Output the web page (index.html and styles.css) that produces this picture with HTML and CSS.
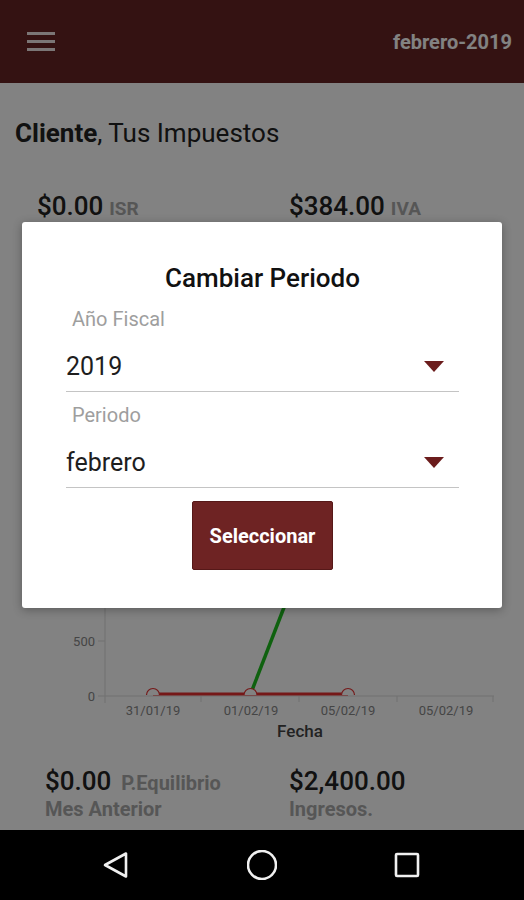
FILE: index.html
```html
<!DOCTYPE html>
<html lang="es">
<head>
    <meta charset="UTF-8">
    <meta name="viewport" content="width=device-width, initial-scale=1.0">
    <title>Tus Impuestos</title>
    <link rel="stylesheet" href="styles.css">
</head>
<body>
  <div class="phone">
    <div class="app">
      <!-- Toolbar -->
      <header class="toolbar">
        <button class="menu-btn" aria-label="Menu">
          <span></span><span></span><span></span>
        </button>
        <span class="period">febrero-2019</span>
      </header>

      <main class="content">
        <h1 class="greeting"><b>Cliente</b>, Tus Impuestos</h1>

        <div class="stats top">
          <div class="stat"><span class="amount">$0.00</span> <span class="tag">ISR</span></div>
          <div class="stat"><span class="amount">$384.00</span> <span class="tag">IVA</span></div>
        </div>

        <!-- Chart -->
        <svg class="chart" width="524" height="515" viewBox="0 230 524 515">
          <line class="axis" x1="105" y1="230" x2="105" y2="703"/>
          <line class="axis" x1="105" y1="696" x2="494" y2="696"/>
          <line class="axis" x1="98" y1="641" x2="105" y2="641"/>
          <line class="axis" x1="98" y1="696" x2="105" y2="696"/>
          <line class="axis" x1="98" y1="586" x2="105" y2="586"/>
          <line class="axis" x1="201" y1="696" x2="201" y2="702"/>
          <line class="axis" x1="299" y1="696" x2="299" y2="702"/>
          <line class="axis" x1="397" y1="696" x2="397" y2="702"/>
          <line class="axis" x1="493" y1="696" x2="493" y2="702"/>

          <text class="tick" x="95" y="591" text-anchor="end">1000</text>
          <text class="tick" x="95" y="646" text-anchor="end">500</text>
          <text class="tick" x="95" y="701" text-anchor="end">0</text>

          <text class="tick" x="153" y="715" text-anchor="middle">31/01/19</text>
          <text class="tick" x="251" y="715" text-anchor="middle">01/02/19</text>
          <text class="tick" x="348" y="715" text-anchor="middle">05/02/19</text>
          <text class="tick" x="446" y="715" text-anchor="middle">05/02/19</text>
          <text class="axis-title" x="300" y="737" text-anchor="middle">Fecha</text>

          <polyline class="line-green" points="251,693 300,566"/>
          <polyline class="line-red" points="153,694 348,694"/>
          <path class="dot" d="M146.5 695 A6.5 6.5 0 0 1 159.5 695"/>
          <path class="dot" d="M244 695 A6.5 6.5 0 0 1 257 695"/>
          <path class="dot" d="M341.5 695 A6.5 6.5 0 0 1 354.5 695"/>
        </svg>

        <div class="stats bottom">
          <div class="stat">
            <div><span class="amount">$0.00</span> <span class="tag">P.Equilibrio</span></div>
            <div class="tag">Mes Anterior</div>
          </div>
          <div class="stat">
            <div><span class="amount">$2,400.00</span></div>
            <div class="tag">Ingresos.</div>
          </div>
        </div>
      </main>

      <div class="scrim"></div>

      <!-- Dialog -->
      <div class="dialog">
        <h2 class="dialog-title">Cambiar Periodo</h2>

        <div class="field">
          <label class="field-label">Año Fiscal</label>
          <div class="select">
            <span>2019</span>
            <span class="caret"></span>
          </div>
        </div>

        <div class="field">
          <label class="field-label">Periodo</label>
          <div class="select">
            <span>febrero</span>
            <span class="caret"></span>
          </div>
        </div>

        <button class="select-btn">Seleccionar</button>
      </div>
    </div>

    <!-- Android navigation -->
    <nav class="navbar">
      <svg class="nav-icon" width="30" height="30" viewBox="0 0 30 30">
        <path d="M3 15 L24 3.5 L24 26.5 Z" />
      </svg>
      <svg class="nav-icon" width="30" height="30" viewBox="0 0 30 30">
        <circle cx="15" cy="15" r="14" />
      </svg>
      <svg class="nav-icon" width="30" height="30" viewBox="0 0 30 30">
        <rect x="4" y="4" width="22" height="22" rx="1" />
      </svg>
    </nav>
  </div>
</body>
</html>
```

FILE: styles.css
```css
* {
    box-sizing: border-box;
}

body {
    margin: 0;
    font-family: Roboto, 'Noto Sans', sans-serif;
    background-color: #000;
}

.phone {
    width: 524px;
    height: 900px;
    display: flex;
    flex-direction: column;
}

.app {
    position: relative;
    height: 830px;
    background-color: #ffffff;
    overflow: hidden;
}

/* Toolbar */
.toolbar {
    height: 83px;
    background-color: #672525;
    display: flex;
    align-items: center;
    justify-content: space-between;
    padding: 0 12px 0 27px;
}

.menu-btn {
    display: flex;
    flex-direction: column;
    gap: 5px;
    padding: 0;
    border: none;
    background: none;
}

.menu-btn span {
    display: block;
    width: 28px;
    height: 3px;
    background-color: #f2e8e8;
}

.period {
    color: #ffffff;
    font-size: 20px;
    font-weight: 700;
}

/* Content */
.content {
    padding-top: 36px;
}

.greeting {
    margin: 0 0 0 15px;
    font-size: 26px;
    line-height: 28px;
    font-weight: 400;
    color: #222;
}

.stats {
    display: grid;
    grid-template-columns: 252px 1fr;
}

.stats.top {
    margin-top: 44px;
    padding-left: 37px;
}

.stats.bottom {
    margin-top: 21px;
    padding-left: 45px;
    grid-template-columns: 244px 1fr;
}

.amount {
    font-size: 26px;
    line-height: 30px;
    font-weight: 500;
    color: #222;
}

.tag {
    font-size: 20px;
    font-weight: 700;
    color: #aaaaaa;
}

.stats.top .amount {
    margin-right: 2px;
}

.stats.top .tag {
    font-size: 19px;
}

.stats.bottom .amount {
    margin-right: 6px;
}

.stats.bottom .tag {
    line-height: 26px;
}

.chart {
    display: block;
    margin-top: 9px;
}

.axis {
    stroke: #dddddd;
    stroke-width: 1;
}

.tick {
    font-family: Roboto, sans-serif;
    font-size: 13px;
    fill: #888888;
}

.axis-title {
    font-family: Roboto, sans-serif;
    font-size: 17px;
    font-weight: 500;
    fill: #444444;
}

.line-green {
    fill: none;
    stroke: #1fbf1f;
    stroke-width: 3.5;
}

.line-red {
    fill: none;
    stroke: #e53030;
    stroke-width: 3;
}

.dot {
    fill: #ffffff;
    stroke: #e53030;
    stroke-width: 1.2;
}

/* Dialog */
.scrim {
    position: absolute;
    inset: 0;
    background-color: rgba(0, 0, 0, 0.49);
}

.dialog {
    position: absolute;
    top: 222px;
    left: 22px;
    width: 480px;
    height: 386px;
    background-color: #ffffff;
    border-radius: 3px;
    box-shadow: 0 2px 10px rgba(0, 0, 0, 0.3);
    padding: 42px 43px 0 44px;
    display: flex;
    flex-direction: column;
}

.dialog-title {
    margin: 0;
    text-align: center;
    font-size: 26px;
    line-height: 28px;
    font-weight: 500;
    color: #111;
}

.field {
    margin-top: 17px;
}

.field + .field {
    margin-top: 13px;
}

.field-label {
    display: block;
    margin-left: 6px;
    font-size: 20px;
    line-height: 20px;
    color: #9e9e9e;
}

.select {
    margin-top: 13px;
    height: 50px;
    border-bottom: 1px solid #c4c4c4;
    display: flex;
    align-items: center;
    justify-content: space-between;
    padding-right: 15px;
    font-size: 25px;
    color: #1e1e1e;
}

.caret {
    width: 0;
    height: 0;
    border-left: 10.5px solid transparent;
    border-right: 10.5px solid transparent;
    border-top: 11px solid #6b1c1c;
}

.select-btn {
    align-self: center;
    margin-top: 13px;
    width: 141px;
    height: 69px;
    border: 1px solid #561818;
    border-radius: 2px;
    background-color: #6e2323;
    color: #ffffff;
    font-family: Roboto, sans-serif;
    font-size: 20px;
    font-weight: 700;
    cursor: pointer;
}

/* Navigation bar */
.navbar {
    height: 70px;
    background-color: #000;
    display: flex;
    align-items: center;
    justify-content: center;
    gap: 115px;
}

.nav-icon path,
.nav-icon circle,
.nav-icon rect {
    fill: none;
    stroke: #f0f0f0;
    stroke-width: 2.6;
    stroke-linejoin: round;
}
```
